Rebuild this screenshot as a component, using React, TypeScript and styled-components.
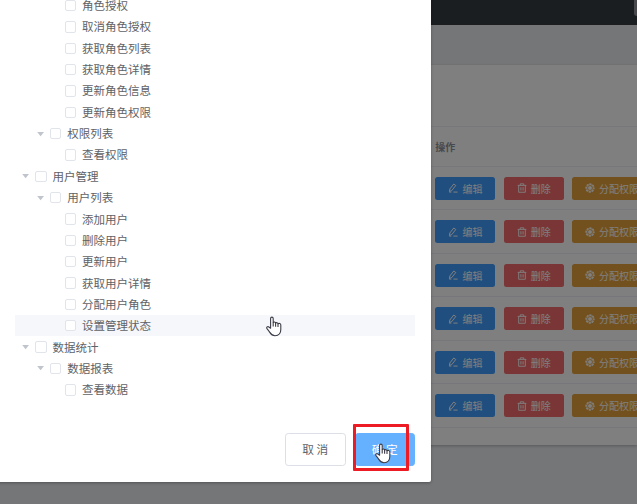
import React from 'react';
import styled, { createGlobalStyle } from 'styled-components';

const GlobalStyle = createGlobalStyle`
  * { box-sizing: border-box; }
  html, body { margin: 0; padding: 0; overflow: hidden; }
  body {
    font-family: "Noto Sans CJK SC", "Noto Sans", sans-serif;
    color: #606266;
    font-size: 11.5px;
  }
`;

const Page = styled.div`
  position: relative;
  width: 637px;
  height: 504px;
  overflow: hidden;
  background: #eaedf1;
`;

const Header = styled.header`
  display: flex;
  justify-content: flex-end;
  height: 24.5px;
  background: #373d41;
`;

const LogoutButton = styled.div`
  width: 3.5px;
  height: 16px;
  border-radius: 0 0 0 3px;
  background: #909399;
`;

const Card = styled.main`
  margin-top: 40.5px;
  height: 380px;
  padding: 61px 0 0 420px;
  background: #fff;
  box-shadow: 0 1px 3px rgba(0, 0, 0, 0.25);
`;

const TableHead = styled.div`
  display: flex;
  align-items: center;
  height: 40.5px;
  padding: 0 0 0 15.2px;
  border-top: 1px solid #ebeef5;
  border-bottom: 1px solid #ebeef5;
  font-size: 10px;
  font-weight: 700;
  color: #909399;
`;

const TableRow = styled.div`
  display: flex;
  align-items: center;
  gap: 8.3px;
  height: 43.55px;
  padding: 0.8px 0 0 15.4px;
  border-bottom: 1px solid #ebeef5;
`;

const tones = { primary: '#409eff', danger: '#f56c6c', warning: '#e6a23c' };

const ActionButton = styled.button<{ $tone: keyof typeof tones; $wide?: boolean }>`
  display: flex;
  flex: none;
  align-items: center;
  gap: 4px;
  width: ${(p) => (p.$wide ? 80 : 60)}px;
  height: 23px;
  padding: 0 0 0 13px;
  border: 0;
  border-radius: 2.5px;
  background: ${(p) => tones[p.$tone]};
  color: #fff;
  font: 10px/23px "Noto Sans CJK SC", sans-serif;
  white-space: nowrap;
  svg { flex: none; width: 10px; height: 10px; }
`;

const Mask = styled.div`
  position: absolute;
  inset: 0;
  background: rgba(0, 0, 0, 0.5);
`;

const Dialog = styled.section`
  position: absolute;
  top: -10px;
  left: -10px;
  width: 441.4px;
  height: 492px;
  display: flex;
  flex-direction: column;
  justify-content: space-between;
  padding: 4.9px 16.4px 16.5px 25px;
  border-radius: 2px;
  background: #fff;
  box-shadow: 0 1px 3px rgba(0, 0, 0, 0.3);
`;

const TreeRow = styled.div<{ $level: number; $hover?: boolean }>`
  display: flex;
  align-items: center;
  height: 21.35px;
  padding-left: ${(p) => 5 + p.$level * 14.75}px;
  background: ${(p) => (p.$hover ? '#f5f7fa' : 'transparent')};
  line-height: 21px;
  white-space: nowrap;
`;

const Caret = styled.svg<{ $leaf: boolean }>`
  width: 15px;
  height: 10px;
  flex: none;
  fill: #c0c4cc;
  visibility: ${(p) => (p.$leaf ? 'hidden' : 'visible')};
`;

const Checkbox = styled.span`
  flex: none;
  width: 11.5px;
  height: 11.5px;
  margin-right: 6px;
  border: 1px solid #e1e4ea;
  border-radius: 2px;
  background: #fff;
`;

const Footer = styled.footer`
  display: flex;
  justify-content: flex-end;
  gap: 9px;
`;

const FooterButton = styled.button<{ $primary?: boolean }>`
  width: 60.5px;
  height: 32.8px;
  padding: 0;
  border: 1px solid ${(p) => (p.$primary ? '#66b1ff' : '#dcdfe6')};
  border-radius: 3.3px;
  background: ${(p) => (p.$primary ? '#66b1ff' : '#fff')};
  color: ${(p) => (p.$primary ? '#fff' : '#606266')};
  font: 11.7px/30px "Noto Sans CJK SC", sans-serif;
`;

const Highlight = styled.div`
  position: absolute;
  left: 353px;
  top: 424px;
  width: 56px;
  height: 47px;
  border: 3px solid #ed1c24;
  border-radius: 1px;
`;

const Cursor = styled.svg<{ $x: number; $y: number }>`
  position: absolute;
  left: ${(p) => p.$x}px;
  top: ${(p) => p.$y}px;
  width: 16px;
  height: 21px;
`;

const HandCursor = ({ x, y }: { x: number; y: number }) => (
  <Cursor $x={x} $y={y} viewBox="0 0 16 21">
    <path
      d="M4.6 12.2V2.5C4.6.6 7.2.6 7.2 2.5V6.5C8 5.7 9.3 6 9.6 7C10.4 6.3 11.7 6.6 12 7.7C13 7 14.8 7.4 14.8 9V13.6C14.8 17.5 12.7 19.7 9 19.7C5.6 19.7 4.7 17.8 3.3 15.6L1 12.6C.1 11.2 1.7 10 2.9 11Z"
      fill="#fff"
      stroke="#3c3c48"
      strokeWidth="1.1"
      strokeLinejoin="round"
    />
    <path d="M7.2 6.5V10.5M9.6 7V10.8M12 7.7V11" stroke="#3c3c48" strokeWidth="1.1" fill="none" />
  </Cursor>
);

const EditIcon = () => (
  <svg viewBox="0 0 12 12" fill="none" stroke="#fff" strokeWidth="1.2">
    <path d="M2.2 7.2L6.9 1.2L9.3 3L4.6 9L1.7 10.2ZM1.5 10.9H4M6.5 10.9H11.5" />
  </svg>
);

const TrashIcon = () => (
  <svg viewBox="0 0 12 12" fill="none" stroke="#fff" strokeWidth="1.1">
    <path d="M.8 2.9H11.2M3.9 2.8V1H8.1V2.8M2 3V11.1H10V3M4.7 5V9M7.3 5V9" />
  </svg>
);

const SettingIcon = () => (
  <svg viewBox="0 0 12 12" fill="none" stroke="#fff">
    <circle cx="6" cy="6" r="4.8" strokeWidth="1.6" strokeDasharray="2.6 1.17" strokeDashoffset="1.3" />
    <circle cx="6" cy="6" r="4" strokeWidth="1" />
    <circle cx="6" cy="6" r="2.1" fill="#fff" strokeWidth="0.7" />
  </svg>
);

const nodes: { label: string; level: number; hover?: boolean }[] = [
  { label: '角色授权', level: 2 },
  { label: '取消角色授权', level: 2 },
  { label: '获取角色列表', level: 2 },
  { label: '获取角色详情', level: 2 },
  { label: '更新角色信息', level: 2 },
  { label: '更新角色权限', level: 2 },
  { label: '权限列表', level: 1 },
  { label: '查看权限', level: 2 },
  { label: '用户管理', level: 0 },
  { label: '用户列表', level: 1 },
  { label: '添加用户', level: 2 },
  { label: '删除用户', level: 2 },
  { label: '更新用户', level: 2 },
  { label: '获取用户详情', level: 2 },
  { label: '分配用户角色', level: 2 },
  { label: '设置管理状态', level: 2, hover: true },
  { label: '数据统计', level: 0 },
  { label: '数据报表', level: 1 },
  { label: '查看数据', level: 2 },
];

export default function App() {
  return (
    <>
      <GlobalStyle />
      <Page>
        <Header>
          <LogoutButton />
        </Header>
        <Card>
          <TableHead>操作</TableHead>
          {Array.from({ length: 6 }, (_, i) => (
            <TableRow key={i}>
              <ActionButton $tone="primary"><EditIcon />编辑</ActionButton>
              <ActionButton $tone="danger"><TrashIcon />删除</ActionButton>
              <ActionButton $tone="warning" $wide><SettingIcon />分配权限</ActionButton>
            </TableRow>
          ))}
        </Card>
        <Mask />
        <Dialog>
          <div>
            {nodes.map((n) => (
              <TreeRow key={n.label} $level={n.level} $hover={n.hover}>
                <Caret $leaf={n.level === 2} viewBox="0 0 15 10">
                  <path d="M2.2 3H9L5.6 7.2Z" />
                </Caret>
                <Checkbox />
                {n.label}
              </TreeRow>
            ))}
          </div>
          <Footer>
            <FooterButton>取 消</FooterButton>
            <FooterButton $primary>确 定</FooterButton>
          </Footer>
        </Dialog>
        <Highlight />
        <HandCursor x={265.5} y={315.5} />
        <HandCursor x={375} y={443} />
      </Page>
    </>
  );
}
